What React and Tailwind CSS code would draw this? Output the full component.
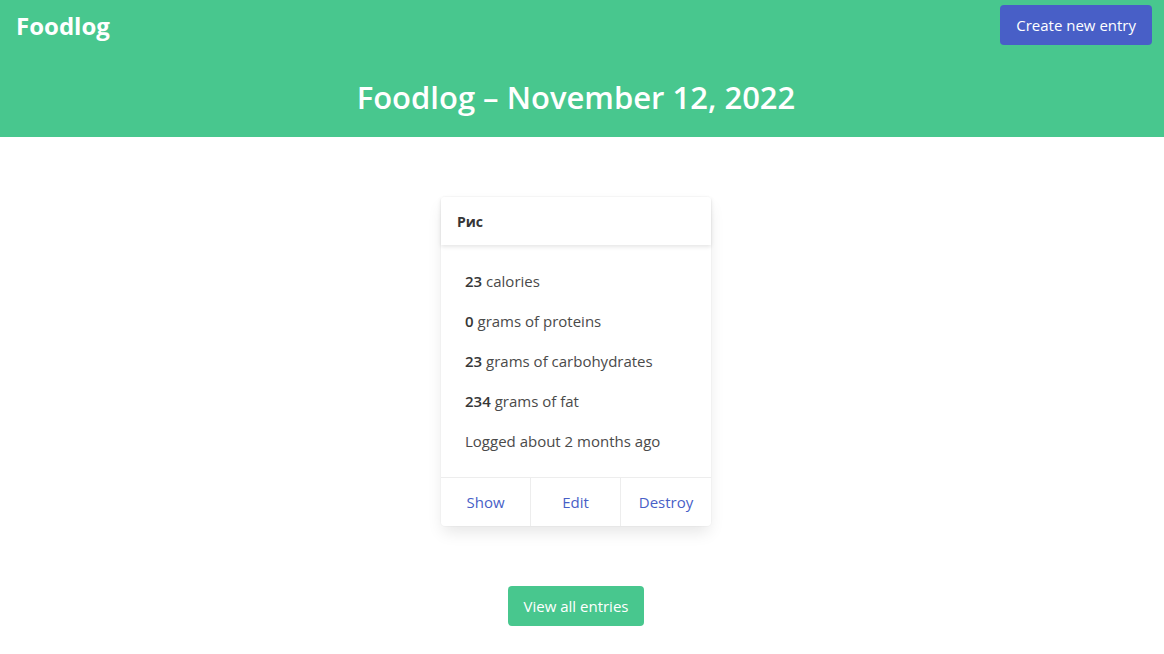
const FONT = "font-['Segoe_UI','Open_Sans','Noto_Sans',sans-serif]";

const STATS = [
  ["23", "calories"],
  ["0", "grams of proteins"],
  ["23", "grams of carbohydrates"],
  ["234", "grams of fat"],
];

function EntryCard() {
  return (
    <div className="w-[270px] rounded-[4px] bg-white shadow-[0_8px_16px_-2px_rgba(10,10,10,0.1),0_0_0_1px_rgba(10,10,10,0.02)]">
      <header className="flex h-[48px] items-center px-4 text-[14px] font-bold text-[#363636] shadow-[0_2px_4px_rgba(10,10,10,0.1)]">
        Рис
      </header>
      <div className="px-6 pt-[25px] pb-[7px] text-[15px] text-[#4a4a4a]">
        {STATS.map(([n, label]) => (
          <p key={label} className="h-[40px] leading-[22px]">
            <strong className="font-semibold text-[#363636]">{n}</strong> {label}
          </p>
        ))}
        <p className="h-[40px] leading-[22px]">Logged about 2 months ago</p>
      </div>
      <footer className="grid grid-cols-3 border-t border-[#ededed] text-[15px] text-[#485fc7]">
        <a className="flex h-[48px] items-center justify-center border-r border-[#ededed]">Show</a>
        <a className="flex h-[48px] items-center justify-center border-r border-[#ededed]">Edit</a>
        <a className="flex h-[48px] items-center justify-center">Destroy</a>
      </footer>
    </div>
  );
}

export default function App() {
  return (
    <div className={`${FONT} min-h-[654px] bg-white`}>
      <section className="h-[137px] bg-[#48c78e] text-white">
        <nav className="flex items-start justify-between pl-4 pr-3 pt-[5px]">
          <span className="mt-[5px] text-[24px] font-bold leading-[32px]">Foodlog</span>
          <button className="h-[40px] rounded-[4px] bg-[#485fc7] px-4 text-[15px]">Create new entry</button>
        </nav>
        <h1 className="mt-[32px] pr-3 text-center text-[31px] font-semibold leading-[40px]">
          Foodlog – November 12, 2022
        </h1>
      </section>
      <main className="flex flex-col items-center pt-[60px] pr-3">
        <EntryCard />
        <button className="mt-[60px] h-[40px] rounded-[4px] bg-[#48c78e] px-4 text-[15px] text-white">
          View all entries
        </button>
      </main>
    </div>
  );
}
